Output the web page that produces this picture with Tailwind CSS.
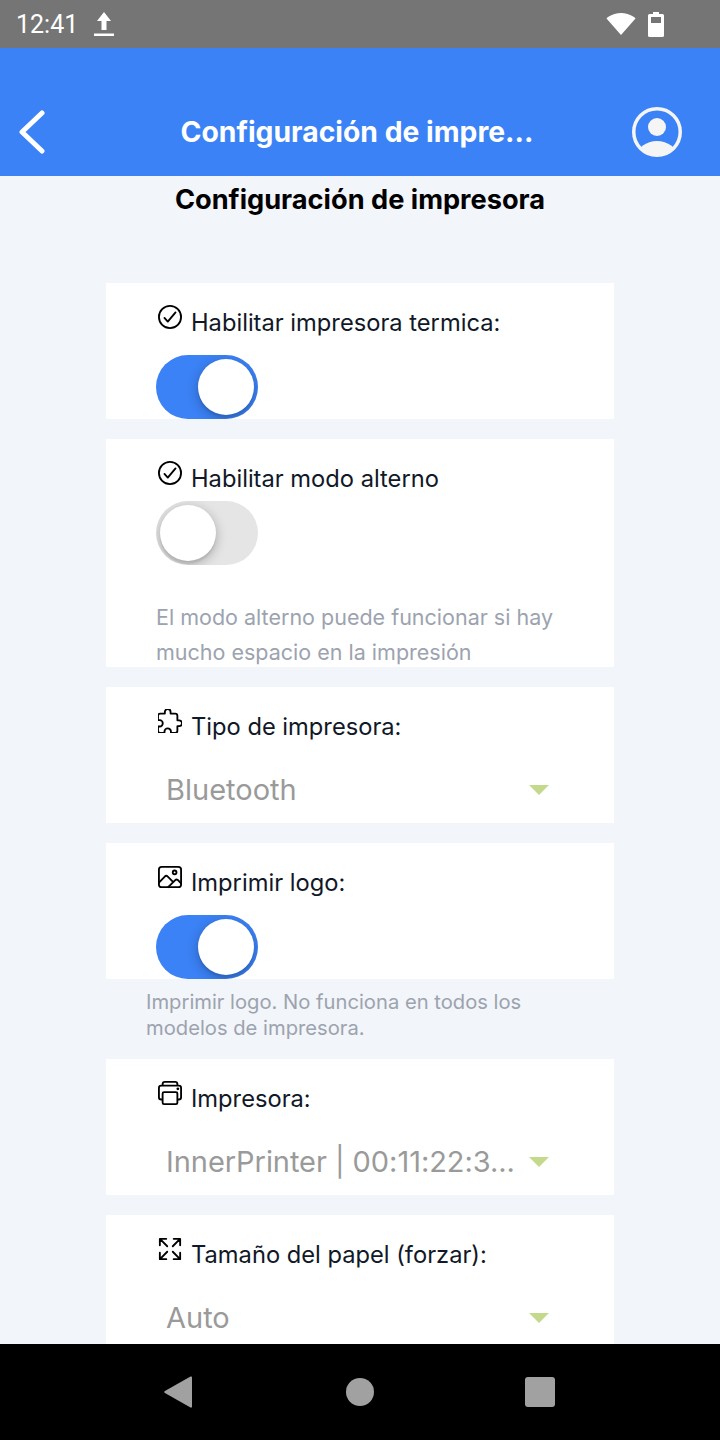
<!DOCTYPE html>
<html>
	<head>
		<meta charset="utf-8">
		<script src="https://cdn.jsdelivr.net/npm/@tailwindcss/browser@4"></script>
	</head>

	<body>
		<div class="w-[720px] h-[1440px] flex flex-col overflow-hidden font-[Inter,sans-serif] text-[#111827]">
			<!-- status bar -->
			<div class="h-12 shrink-0 bg-[#757575] flex items-center justify-between pl-[16px] pr-[56px] text-white">
				<div class="flex items-center gap-[15px]">
					<span class="font-[Roboto,sans-serif] text-[25px] leading-none">12:41</span>
					<svg width="22" height="26" viewBox="0 0 22 26" fill="#fff"><path d="M11 1 L18 10 H13.500 V19 H8.500 V10 H4 Z"/><rect x="1" y="22.500" width="20" height="2.500"/></svg>
				</div>
				<div class="flex items-center gap-[12px]">
					<svg width="30" height="24" viewBox="0 0 30 24" fill="#fff"><path d="M15 23 L0.500 6.500 Q1 5.500 2 5 Q15 -3 28 5 Q29 5.500 29.500 6.500 Z"/></svg>
					<svg width="16" height="25" viewBox="0 0 16 25" fill="#fff"><path fill-rule="evenodd" d="M5 0 H11 V2 H14.500 Q16 2 16 3.500 V23.500 Q16 25 14.500 25 H1.500 Q0 25 0 23.500 V3.500 Q0 2 1.500 2 H5 Z M3 5 V11 H13 V5 Z"/></svg>
				</div>
			</div>

			<!-- header -->
			<div class="h-32 shrink-0 bg-[#3b82f6] flex items-end">
				<div class="h-[80px] w-full relative flex items-center justify-center text-white pb-[8px] pr-[6px]">
					<svg class="absolute left-[18px] top-[14px]" width="28" height="44" viewBox="0 0 28 44" fill="none" stroke="#fff" stroke-width="5" stroke-linecap="round" stroke-linejoin="round"><path d="M24 3 L4 22 L24 41"/></svg>
					<span class="text-[28.3px] leading-[34px] font-bold">Configuración de impre...</span>
					<svg class="absolute left-[631px] top-[10px]" width="52" height="52" viewBox="0 0 52 52"><defs><clipPath id="avatar"><circle cx="26" cy="26" r="23"/></clipPath></defs><circle cx="26" cy="26" r="23.250" fill="none" stroke="#f5f5f5" stroke-width="3.500"/><ellipse cx="26" cy="21" rx="9" ry="9" fill="#f5f5f5"/><ellipse cx="26" cy="50" rx="20" ry="15" fill="#f5f5f5" clip-path="url(#avatar)"/></svg>
				</div>
			</div>

			<!-- content -->
			<div class="flex-1 overflow-hidden bg-[#f2f5f9]">
				<h1 class="h-[48px] flex items-center justify-center text-[27.2px] font-bold text-black">Configuración de impresora</h1>
				<div class="mt-[59px] mx-[106px] flex flex-col">

					<div class="h-[136px] bg-white pl-[50px] pt-[22px]">
						<div class="flex items-start gap-[9px]">
							<svg class="shrink-0 ml-[2px]" width="24" height="24" viewBox="48 48 416 416" fill="none" stroke="#000" stroke-width="32"><path d="M448 256c0-106-86-192-192-192S64 150 64 256s86 192 192 192 192-86 192-192z" stroke-miterlimit="10"/><path d="M352 176L217.600 336 160 272" stroke-linecap="round" stroke-linejoin="round"/></svg>
							<span class="text-[23.7px] leading-[28px] mt-[4px]">Habilitar impresora termica:</span>
						</div>
						<div class="mt-[18px] w-[102px] h-[64px] rounded-full overflow-hidden bg-[#3b82f6] flex items-center justify-end pr-[4px]">
							<div class="w-[56px] h-[56px] rounded-full bg-white shadow-[0_3px_12px_rgba(0,0,0,0.28),0_3px_1px_rgba(0,0,0,0.06)]"></div>
						</div>
					</div>

					<div class="mt-[20px] h-[228px] bg-white pl-[50px] pt-[22px]">
						<div class="flex items-start gap-[9px]">
							<svg class="shrink-0 ml-[2px]" width="24" height="24" viewBox="48 48 416 416" fill="none" stroke="#000" stroke-width="32"><path d="M448 256c0-106-86-192-192-192S64 150 64 256s86 192 192 192 192-86 192-192z" stroke-miterlimit="10"/><path d="M352 176L217.600 336 160 272" stroke-linecap="round" stroke-linejoin="round"/></svg>
							<span class="text-[23.7px] leading-[28px] mt-[4px]">Habilitar modo alterno</span>
						</div>
						<div class="mt-[8px] w-[102px] h-[64px] rounded-full overflow-hidden bg-[#e5e5e5] flex items-center pl-[4px]">
							<div class="w-[56px] h-[56px] rounded-full bg-white shadow-[0_3px_12px_rgba(0,0,0,0.28),0_3px_1px_rgba(0,0,0,0.06)]"></div>
						</div>
						<p class="mt-[35px] text-[21.5px] leading-[35px] text-[#9ca3af]">El modo alterno puede funcionar si hay<br>mucho espacio en la impresión</p>
					</div>

					<div class="mt-[20px] h-[136px] bg-white pl-[50px] pt-[22px]">
						<div class="flex items-start gap-[9px]">
							<svg class="shrink-0 ml-[2px]" width="24" height="24" viewBox="48 48 416 416" fill="none" stroke="#000" stroke-width="32"><path stroke-linecap="round" stroke-linejoin="round" d="M413.660 246.100H386a2 2 0 01-2-2v-77.240A38.860 38.860 0 00345.140 128H267.900a2 2 0 01-2-2V98.340c0-27.140-21.500-49.860-48.640-50.330a49.530 49.530 0 00-50.400 49.510V126a2 2 0 01-2 2H87.620A39.740 39.740 0 0048 167.620V238a2 2 0 002 2h26.910c29.370 0 53.680 25.480 54.090 54.850.42 29.870-23.510 57.150-53.290 57.150H50a2 2 0 00-2 2v70.380A39.740 39.740 0 0087.620 464H158a2 2 0 002-2v-20.930c0-30.280 24.750-56.350 55-57.060 30.100-.7 57 20.310 57 50.280V462a2 2 0 002 2h71.140A38.860 38.860 0 00384 425.140v-78a2 2 0 012-2h28.480c27.630 0 49.520-22.670 49.520-50.400s-23.200-48.640-50.340-48.640z"/></svg>
							<span class="text-[23.7px] leading-[28px] mt-[4px]">Tipo de impresora:</span>
						</div>
						<div class="mt-[17px] h-[64px] flex items-center pl-[10px] pr-[65px] gap-[10px]">
							<span class="flex-1 whitespace-nowrap text-[29px] text-[#9a9a9a]">Bluetooth</span>
							<div class="w-0 h-0 border-x-[10px] border-x-transparent border-t-[10px] border-t-[#c5d98c]"></div>
						</div>
					</div>

					<div class="mt-[20px] h-[136px] bg-white pl-[50px] pt-[22px]">
						<div class="flex items-start gap-[9px]">
							<svg class="shrink-0 ml-[2px]" width="24" height="24" viewBox="48 48 416 416" fill="none" stroke="#000" stroke-width="32"><rect x="64" y="80" width="384" height="352" rx="48" ry="48" stroke-linejoin="round"/><circle cx="336" cy="176" r="32" stroke-miterlimit="10"/><path stroke-linecap="round" stroke-linejoin="round" d="M304 335.790l-90.660-90.490a32 32 0 00-43.870-1.300L64 352M224 432l123.340-123.340a32 32 0 0143.110-2L448 368"/></svg>
							<span class="text-[23.7px] leading-[28px] mt-[4px]">Imprimir logo:</span>
						</div>
						<div class="mt-[18px] w-[102px] h-[64px] rounded-full overflow-hidden bg-[#3b82f6] flex items-center justify-end pr-[4px]">
							<div class="w-[56px] h-[56px] rounded-full bg-white shadow-[0_3px_12px_rgba(0,0,0,0.28),0_3px_1px_rgba(0,0,0,0.06)]"></div>
						</div>
					</div>
					<p class="h-[80px] pt-[10px] pl-[40px] text-[20.2px] leading-[26px] text-[#9ca3af]">Imprimir logo. No funciona en todos los<br>modelos de impresora.</p>

					<div class="h-[136px] bg-white pl-[50px] pt-[22px]">
						<div class="flex items-start gap-[9px]">
							<svg class="shrink-0 ml-[2px]" width="24" height="24" viewBox="48 48 416 416" fill="none" stroke="#000" stroke-width="32"><path stroke-linejoin="round" d="M384 368h24a40.120 40.120 0 0040-40V168a40.120 40.120 0 00-40-40H104a40.120 40.120 0 00-40 40v160a40.120 40.120 0 0040 40h24"/><rect x="128" y="240" width="256" height="208" rx="24.320" ry="24.320" stroke-linejoin="round"/><path stroke-linejoin="round" d="M384 128v-24a40.120 40.120 0 00-40-40H168a40.120 40.120 0 00-40 40v24"/><circle cx="392" cy="184" r="24" fill="#000" stroke="none"/></svg>
							<span class="text-[23.7px] leading-[28px] mt-[4px]">Impresora:</span>
						</div>
						<div class="mt-[17px] h-[64px] flex items-center pl-[10px] pr-[65px] gap-[10px]">
							<span class="flex-1 whitespace-nowrap text-[29px] tracking-[-0.05px] text-[#9a9a9a]">InnerPrinter | 00:11:22:3...</span>
							<div class="w-0 h-0 border-x-[10px] border-x-transparent border-t-[10px] border-t-[#c5d98c]"></div>
						</div>
					</div>

					<div class="mt-[20px] h-[136px] bg-white pl-[50px] pt-[22px]">
						<div class="flex items-start gap-[9px]">
							<svg class="shrink-0 ml-[2px]" width="24" height="24" viewBox="48 48 416 416" fill="none" stroke="#000" stroke-width="32" stroke-linecap="round" stroke-linejoin="round"><path d="M432 320v112H320M421.800 421.770L304 304M80 192V80h112M90.200 90.230L208 208M320 80h112v112M421.770 90.200L304 208M192 432H80V320M90.230 421.800L208 304"/></svg>
							<span class="text-[23.7px] leading-[28px] mt-[4px]">Tamaño del papel (forzar):</span>
						</div>
						<div class="mt-[17px] h-[64px] flex items-center pl-[10px] pr-[65px] gap-[10px]">
							<span class="flex-1 whitespace-nowrap text-[29px] text-[#9a9a9a]">Auto</span>
							<div class="w-0 h-0 border-x-[10px] border-x-transparent border-t-[10px] border-t-[#c5d98c]"></div>
						</div>
					</div>
				</div>
			</div>

			<!-- nav bar -->
			<div class="h-24 shrink-0 bg-black flex items-center pl-[164px]">
				<svg class="mr-[154px]" width="28" height="32" viewBox="0 0 28 32" fill="#a1a1a1"><path d="M26.500 0.500 Q28 0 28 1.500 V30.500 Q28 32 26.500 31.500 L0.500 16.800 Q0 16 0.500 15.200 Z"/></svg>
				<div class="mr-[151px] w-[28px] h-[28px] rounded-full bg-[#a1a1a1]"></div>
				<div class="w-[30px] h-[30px] rounded-[3px] bg-[#a1a1a1]"></div>
			</div>
		</div>
	</body>
</html>
